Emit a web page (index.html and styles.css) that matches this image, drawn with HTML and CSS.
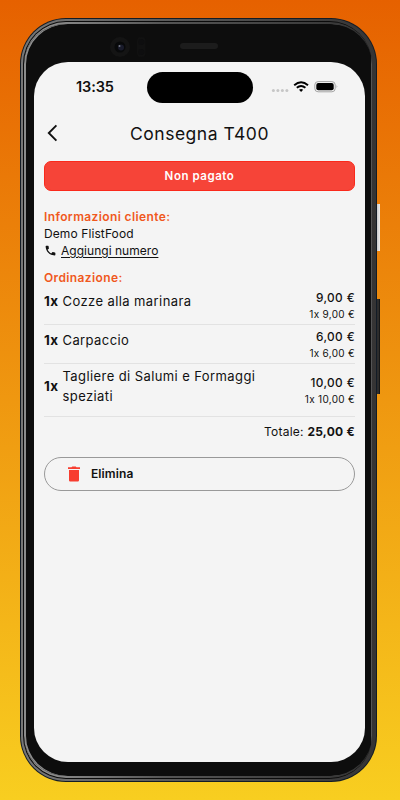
FILE: index.html
```html
<!DOCTYPE html>
<html lang="it">
<head>
<meta charset="utf-8">
<title>Consegna T400</title>
<link rel="stylesheet" href="styles.css">
</head>
<body>
<div class="phone">
  <span class="key power"></span>
  <span class="key volume"></span>
  <div class="ring"><div class="groove"><div class="bezel">
    <div class="sensors">
      <svg class="camera" width="34" height="22" viewBox="0 0 34 22">
        <circle cx="10" cy="11" r="10" fill="#141414"/>
        <circle cx="10" cy="11" r="5.5" fill="#08090a"/>
        <circle cx="11" cy="11.4" r="3" fill="#191b2b"/>
        <circle cx="9.5" cy="10" r="1" fill="#777b88"/>
        <rect x="27" y="1" width="8.5" height="20" rx="4" fill="#111"/>
        <circle cx="31.2" cy="6" r="3" fill="#0e0e0f"/><circle cx="31.2" cy="16" r="3" fill="#0e0e0f"/>
      </svg>
      <span class="speaker"></span>
    </div>
    <main class="screen">
      <div class="status">
        <span class="time">13:35</span>
        <span class="island"></span>
        <svg class="signals" width="68" height="14" viewBox="0 0 68 14">
          <g fill="#c6c6c6"><circle cx="2.4" cy="10.6" r="1.5"/><circle cx="6.9" cy="10.6" r="1.5"/><circle cx="11.4" cy="10.6" r="1.5"/><circle cx="15.9" cy="10.6" r="1.5"/></g>
          <g fill="none" stroke="#000" stroke-width="1.9"><path d="M23.2 5.2Q30.1-.9 37 5.2"/><path d="M25.8 7.8Q30.1 4.2 34.4 7.8"/></g>
          <path d="M28 9.8Q30.1 8.2 32.2 9.8L30.1 12Z"/>
          <rect x="43.8" y="1.6" width="20.4" height="10.2" rx="3.3" fill="none" stroke="#a5a5a5"/>
          <rect x="45.3" y="3.1" width="17.4" height="7.2" rx="2"/>
          <path d="M65.6 5.1q1.5 1.6 0 3.2z" fill="#a5a5a5"/>
        </svg>
      </div>
      <header class="appbar">
        <svg class="back" width="12" height="18" viewBox="0 0 12 18"><path d="M9.4 1.4 1.8 9l7.6 7.6" fill="none" stroke="#111" stroke-width="1.9"/></svg>
        <h1>Consegna T400</h1>
      </header>
      <div class="banner">Non pagato</div>
      <section class="client">
        <h2>Informazioni cliente:</h2>
        <p>Demo FlistFood</p>
        <p class="phone-line"><svg width="13" height="13" viewBox="0 0 24 24"><path d="M6.62 10.79c1.44 2.83 3.76 5.14 6.59 6.59l2.2-2.2c.27-.27.67-.36 1.02-.24 1.12.37 2.33.57 3.57.57.55 0 1 .45 1 1V20c0 .55-.45 1-1 1C10.61 21 3 13.390 3 4c0-.55.45-1 1-1h3.500c.55 0 1 .45 1 1 0 1.250.2 2.450.57 3.570.11.35.03.74-.25 1.020z" fill="#111"/></svg><a>Aggiungi numero</a></p>
      </section>
      <h2 class="order-title">Ordinazione:</h2>
      <ul class="order">
        <li><b>1x</b><span class="dish">Cozze alla marinara</span><span class="price">9,00 €<small>1x 9,00 €</small></span></li>
        <li><b>1x</b><span class="dish">Carpaccio</span><span class="price">6,00 €<small>1x 6,00 €</small></span></li>
        <li class="tall"><b>1x</b><span class="dish">Tagliere di Salumi e Formaggi speziati</span><span class="price">10,00 €<small>1x 10,00 €</small></span></li>
      </ul>
      <p class="total">Totale: <b>25,00 €</b></p>
      <button class="delete"><svg width="14" height="16" viewBox="0 0 14 16"><path d="M2 4h10v10.300q0 1.200-1.200 1.200H3.200Q2 15.500 2 14.300zM1 1.200h3.500L5.300.4h3.400l.8.800H13v1.700H1z" fill="#f73d2f"/></svg><span>Elimina</span></button>
    </main>
  </div></div></div>
</div>
</body>
</html>
```
FILE: styles.css
```css
* { box-sizing: border-box; margin: 0; padding: 0; }
body {
  width: 400px; height: 800px; overflow: hidden;
  padding: 18px 0 0 20px;
  background: linear-gradient(#e66100, #f8ce20);
  font-family: Inter, "Liberation Sans", sans-serif;
  color: #111;
}
.phone {
  position: relative;
  width: 357px; height: 764px; padding: 1px;
  border-radius: 46px;
  background: #131c26;
}
.key { position: absolute; left: 357px; width: 3px; }
.power { top: 186px; height: 47px; background: linear-gradient(90deg, #c8c8c8, #eee); }
.volume { top: 281px; height: 95px; background: linear-gradient(90deg, #2d2d2d 60%, #080808); }
.ring {
  height: 100%; padding: 2px 4px 2px 1.5px;
  border-radius: 45px;
  background: linear-gradient(90deg, #777 0, #555 50%, #353434 100%);
}
.groove {
  height: 100%; padding: 1px;
  border-radius: 43px;
  background: #0b0b0b;
}
.bezel {
  width: 348.5px; height: 100%; padding: 0 5px 0 11.5px;
  border: solid transparent;
  border-width: 2px 0;
  border-radius: 42px;
  background:
    linear-gradient(90deg, transparent 346.5px, #555 347px),
    linear-gradient(#0d0d0d, #0d0d0d) padding-box,
    linear-gradient(90deg, #999, #555 40%, #333) border-box;
  box-shadow: inset 2px 0 #8b8b8b;
}
.sensors { height: 38px; display: flex; align-items: flex-start; padding: 12px 0 0 75px; }
.camera { overflow: visible; }
.speaker { width: 38px; height: 6px; margin: 7px 0 0 36px; border-radius: 3px; background: #1c1c1c; }
.screen {
  width: 331px; height: 700px;
  margin-left: -1px;
  padding: 0 10px;
  border-radius: 34px;
  background: #f4f4f4;
}
.status { height: 50px; display: flex; padding-top: 10px; }
.time { width: 103px; padding: 6px 0 0 32px; font-size: 14.5px; line-height: 18px; font-weight: 600; letter-spacing: -.1px; }
.island { width: 106px; height: 31px; border-radius: 16px; background: #000; }
.signals { margin: 8px 0 0 18px; }
.appbar { height: 49px; display: grid; grid-template-columns: 12px 1fr 12px; align-items: center; padding: 0 3px; margin-top: -4px; }
h1 { padding-top: 2px; font-size: 17.5px; font-weight: 400; letter-spacing: .5px; text-align: center; line-height: 24px; }
.back { margin-top: 1px; }
.banner {
  height: 30px; margin-top: 4px;
  border: 1px solid #fa291b; border-radius: 7px;
  background: #f64438; color: #fff;
  font-size: 11.5px; font-weight: 600; letter-spacing: .55px; line-height: 29px; text-align: center;
}
.client { margin-top: 17px; font-size: 12px; line-height: 17px; letter-spacing: .1px; }
h2 { font-size: 12px; line-height: 17px; font-weight: 600; letter-spacing: .38px; color: #f0581d; }
.phone-line { display: flex; align-items: center; gap: 4px; }
.phone-line a { text-decoration: underline; text-underline-offset: 2px; letter-spacing: .03px; }
.order-title { margin-top: 10px; }
.order { list-style: none; }
.order li {
  height: 39px; display: grid; grid-template-columns: 18.5px 1fr auto; align-items: center;
  border-bottom: 1px solid #e2e2e2;
  font-size: 13px; letter-spacing: .41px; line-height: 20px;
}
.order li:not(.tall) b, .order li:not(.tall) .dish { padding-bottom: 9px; }
.order li.tall { height: 53px; padding-bottom: 8px; }
.order b { font-size: 13.5px; font-weight: 700; letter-spacing: .4px; }
.order .price { padding-top: 1px; text-align: right; font-size: 11.8px; line-height: 16px; font-weight: 500; letter-spacing: .4px; }
.price small { display: block; font-size: 10px; line-height: 16px; font-weight: 400; letter-spacing: .3px; }
.order .tall .price { padding: 10px 0 0; }
.total { margin-top: 6px; font-size: 12px; line-height: 18px; letter-spacing: .25px; text-align: right; }
.delete {
  width: 100%; height: 34px; margin-top: 16px; padding: 0 0 1px 22px;
  display: flex; align-items: center; gap: 10px;
  border: 1px solid #999; border-radius: 17px; background: transparent;
  font: 600 12px Inter, sans-serif; letter-spacing: .1px; color: #111;
}
```
